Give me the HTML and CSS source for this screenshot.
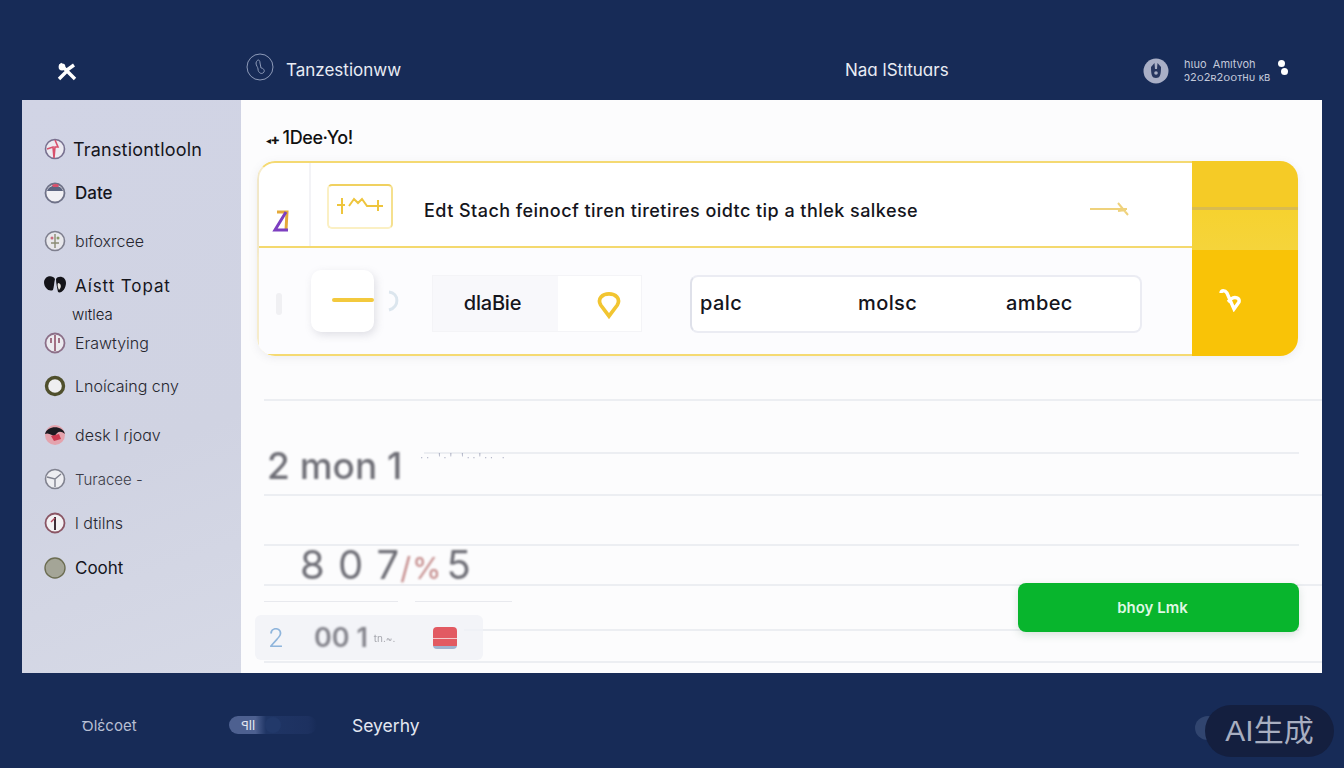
FILE: index.html
```html
<!DOCTYPE html>
<html lang="en">
<head>
<meta charset="UTF-8" />
<title>Transaction tool</title>
<link rel="stylesheet" href="styles.css">
</head>
<body>

<header class="topbar">
  <svg class="logo" width="20" height="20" viewBox="0 0 20 20"><path d="M3 2 L18 17 M2 17 L9 10 M10 8 L17 3" stroke="#fff" stroke-width="3.4" fill="none"/><circle cx="5" cy="5" r="3.4" fill="#fff"/></svg>
  <div class="top-title">
    <svg width="28" height="28" viewBox="0 0 28 28" fill="none" stroke="#8d9ab8" stroke-width="1"><circle cx="14" cy="14" r="13"/><path d="M10 10 C11 6 14 6 14 10 L15 15 C17 15 19 17 18 19 C16 22 12 20 12 16 C12 14 10 13 10 10 Z"/></svg>
    <span>Tanzestionww</span>
  </div>
  <div class="top-center">Naɑ lStıtuɑrs</div>
  <div class="top-user">
    <svg width="26" height="26" viewBox="0 0 26 26"><circle cx="13" cy="13" r="12.5" fill="#a9afc6"/><path d="M8 9 C8 17 9 20 13 20 C17 20 18 17 18 9 L14.5 5 L14 11 L12 11 L11.5 5 Z" fill="#27365f"/><circle cx="13" cy="15" r="1.8" fill="#a9afc6"/></svg>
    <div class="user-text">
      <span>hιuo &nbsp;Amıtvoh</span>
      <span>ɔ2ᴏ2ʀ2ᴏᴏᴛʜᴜ ᴋв</span>
    </div>
    <div class="user-dots"><i></i><i></i></div>
  </div>
</header>

<div class="frame">
  <nav class="sidebar">
    <div class="nav-item first">
      <svg width="22" height="22" viewBox="0 0 22 22"><circle cx="11" cy="11" r="9.5" fill="#eceaf1" stroke="#77708f" stroke-width="1.6"/><path d="M11 2 L14 9 L11 9 L10 20 L9 9 L3 11" fill="none" stroke="#d8506c" stroke-width="1.6"/></svg>
      <span>Transtiontlooln</span>
    </div>
    <div class="nav-item strong">
      <svg width="22" height="22" viewBox="0 0 22 22"><circle cx="11" cy="11" r="9.5" fill="#f1f0f4" stroke="#6f7288" stroke-width="1.8"/><path d="M3 9 C5 2 17 2 19 9 Z" fill="#5d6580"/><path d="M8 3 C10 1.5 13 1.5 15 3 L14 5 L9 5 Z" fill="#d8506c"/></svg>
      <span>Date</span>
    </div>
    <div class="nav-item light">
      <svg width="22" height="22" viewBox="0 0 22 22"><circle cx="11" cy="11" r="9.5" fill="#e8e8ec" stroke="#7e7f8e" stroke-width="1.6"/><circle cx="8" cy="8" r="1.5" fill="#c96a7c"/><circle cx="14" cy="8" r="1.5" fill="#8a9a6a"/><path d="M11 4 V18 M7 13 H15" stroke="#8a8c74" stroke-width="1.4"/></svg>
      <span>bıfoxrcee</span>
    </div>
    <div class="nav-item wide">
      <svg width="22" height="22" viewBox="0 0 22 22"><path d="M11 4 C9 0 1 0 0 7 C0 13 5 17 9 15 C10 12 10 8 11 4 Z" fill="#141419"/><path d="M12 4 C14 0 22 1 22 8 C22 14 17 19 14 17 C13 12 12 8 12 4 Z" fill="#141419"/><path d="M14 8 C17 8 18 12 15 15 C14 13 13 10 14 8 Z" fill="#e9e7e2"/></svg>
      <span>Aístt Topat</span>
    </div>
    <div class="nav-sub">wıtlea</div>
    <div class="nav-item light">
      <svg width="22" height="22" viewBox="0 0 22 22"><circle cx="11" cy="11" r="9.5" fill="#ecebf0" stroke="#8c6f88" stroke-width="1.8"/><path d="M11 3 V19 M7 6 V11 M15 6 V11" stroke="#8a4a62" stroke-width="1.5"/></svg>
      <span>Erawtying</span>
    </div>
    <div class="nav-item light">
      <svg width="22" height="22" viewBox="0 0 22 22"><circle cx="11" cy="11" r="8.5" fill="#eeeef0" stroke="#4f4f2c" stroke-width="3.4"/></svg>
      <span>Lnoícaing cny</span>
    </div>
    <div class="nav-item light">
      <svg width="22" height="22" viewBox="0 0 22 22"><circle cx="11" cy="11" r="10" fill="#e4a3ad"/><path d="M1 10 C3 1 19 1 21 10 C16 6 13 8 11 12 C8 12 5 8 1 10 Z" fill="#1c1a20"/><path d="M7 12 L15 10 L17 15 L10 17 Z" fill="#cd3a50"/></svg>
      <span>desk l ɾjoɑv</span>
    </div>
    <div class="nav-item faint">
      <svg width="22" height="22" viewBox="0 0 22 22" fill="none"><circle cx="11" cy="11" r="9.5" fill="#eeeef2" stroke="#80828f" stroke-width="1.6"/><path d="M3 9 L11 11 L17 6 M11 11 V19" stroke="#80828f" stroke-width="1.4"/></svg>
      <span>Turacee -</span>
    </div>
    <div class="nav-item light">
      <svg width="22" height="22" viewBox="0 0 22 22"><circle cx="11" cy="11" r="9.5" fill="#f3f2f4" stroke="#8a5564" stroke-width="1.8"/><path d="M11 5 V18" stroke="#3d2f38" stroke-width="2"/><path d="M7 10 L11 6" stroke="#b84a60" stroke-width="1.5"/></svg>
      <span>l dtilns</span>
    </div>
    <div class="nav-item">
      <svg width="22" height="22" viewBox="0 0 22 22"><circle cx="11" cy="11" r="10" fill="#a4a597" stroke="#6c6d52" stroke-width="1.4"/></svg>
      <span>Cooht</span>
    </div>
  </nav>

  <main class="main">
    <h2 class="page-title"><small>◂✚</small> 1Dee·Yo!</h2>

    <section class="panel">
      <div class="panel-body">
        <div class="panel-top">
          <div class="rank">
            <svg width="20" height="24" viewBox="0 0 20 24" fill="none" stroke-width="3"><path d="M6 3 H16 L15 21" stroke="#e4a93a"/><path d="M15 3 L4 21 H17" stroke="#7d3fc0"/></svg>
          </div>
          <div class="chart-box">
            <svg width="48" height="20" viewBox="0 0 48 20" fill="none" stroke="#eec53d" stroke-width="2"><path d="M1 10 H9 M6 3 V19 M13 11 L18 4 L22 8 L26 4 L31 11 L35 11 M35 11 H47 M42 5 V16"/></svg>
          </div>
          <p class="headline">Edt Stach feinocf tiren tiretires oidtc tip a thlek salkese</p>
          <svg class="arrow" width="40" height="16" viewBox="0 0 40 16" fill="none" stroke="#efd27c" stroke-width="2"><path d="M0 8 H37 M28 2 L38 14 M36 9 L28 10"/></svg>
        </div>
        <div class="panel-bottom">
          <div class="ghost-bar"></div>
          <div class="dash-tile"><i></i></div>
          <svg class="ghost-arc" width="16" height="22" viewBox="0 0 16 22" fill="none" stroke="#dce6ee" stroke-width="3"><path d="M3 2 C13 3 14 17 3 20"/></svg>
          <div class="seg">
            <div class="seg-label">dlaBie</div>
            <div class="seg-pin">
              <svg width="24" height="30" viewBox="0 0 26 30" fill="none" stroke="#f2c531" stroke-width="4"><path d="M13 27 L4 15 C0 8 6 3 13 3 C20 3 26 8 22 15 Z"/></svg>
            </div>
          </div>
          <div class="tabs">
            <span>palc</span>
            <span>molsc</span>
            <span>ambec</span>
          </div>
        </div>
      </div>
      <div class="panel-side">
        <div class="side-top"></div>
        <div class="side-bottom">
          <svg width="24" height="24" viewBox="0 0 24 24" fill="none" stroke="#fff" stroke-width="3.4"><path d="M3 5 C3 2 7 2 9 5 L16 21 L21 14 C22 10 17 8 13 11 L10 14"/></svg>
        </div>
      </div>
    </section>

    <div class="ledger">
      <div class="line-row r1"></div>
      <div class="line-row r2 short"></div>
      <div class="line-row r3 has-text">
        <span class="big-a">2 mon 1</span>
        <span class="tiny-note">·· ꞌ·ꞌ ꞌ··ꞌ·· ·</span>
      </div>
      <div class="line-row r4 short"></div>
      <div class="line-row r5 has-text">
        <span class="big-b">8 0 7<em>/%</em><b>5</b></span>
      </div>
      <div class="split-lines"><i></i><i></i></div>
      <div class="line-row r6 short"></div>
      <div class="line-row r7"></div>
      <div class="fade-box">
        <span class="fade-two">2</span>
        <span class="fade-num">00 1</span>
        <span class="fade-small">tn.~.</span>
        <span class="fade-tag"></span>
      </div>
    </div>

    <button class="go-btn">bhoy Lmk</button>
  </main>
</div>

<footer class="bottombar">
  <span class="foot-a">Ꝺlέcoet</span>
  <div class="foot-pill"><span>ꟼll</span><i></i></div>
  <span class="foot-b">Seyerhy</span>
</footer>

<div class="ai-dot"></div>
<div class="ai-badge">AI生成</div>

</body>
</html>
```

FILE: styles.css
```css
* { box-sizing: border-box; }
html, body { height: 100%; }
body {
  margin: 0;
  width: 1344px;
  height: 768px;
  overflow: hidden;
  background: #172b57;
  color: #15151c;
  font-family: Inter, "Noto Sans", sans-serif;
  position: relative;
}

/* top bar */
.topbar {
  height: 100px;
  display: grid;
  grid-template-columns: 189px 599px 298px auto;
  align-items: center;
  padding: 38px 0 0 57px;
  color: #e9ecf4;
}
.logo { margin-top: 6px; }
.top-title {
  display: flex;
  align-items: center;
  gap: 12px;
  font-size: 17px;
  margin-top: -4px;
}
.top-title span { margin-top: 5px; }
.top-center { font-size: 17px; margin-top: 2px; }
.top-user {
  display: flex;
  align-items: center;
  margin-top: 3px;
}
.user-text {
  display: flex;
  flex-direction: column;
  margin-left: 15px;
  width: 94px;
  font-size: 11px;
  line-height: 13px;
  color: #c3c9da;
  white-space: nowrap;
}
.user-dots { display: flex; flex-direction: column; gap: 1px; margin-top: -6px; }
.user-dots i {
  width: 7px;
  height: 7px;
  border-radius: 50%;
  background: #fff;
}
.user-dots i:last-child { margin-left: 3px; }

/* main frame */
.frame {
  margin: 0 22px;
  height: 573px;
  display: flex;
  background: #fcfcfd;
}
.sidebar {
  width: 219px;
  flex: none;
  padding: 38px 0 0 22px;
  background: linear-gradient(160deg, #d1d4e5, #d0d3e2 60%, #d6d9e6);
  display: grid;
  grid-template-rows: 44px 48px 45px 29px 28px 43px 49px 44px 44px 45px;
  align-content: start;
}
.nav-item {
  height: 22px;
  display: flex;
  align-items: center;
  gap: 9px;
  font-size: 17px;
  white-space: nowrap;
}
.nav-item.first { gap: 7px; font-size: 18px; letter-spacing: .2px; }
.nav-item.strong { font-weight: 500; }
.nav-item.wide { letter-spacing: .9px; }
.nav-item.light { font-weight: 300; color: #26262f; font-size: 16px; }
.nav-item.faint { font-weight: 300; color: #3c3c48; font-size: 15px; }
.nav-sub {
  height: 22px;
  line-height: 22px;
  padding-left: 28px;
  font-size: 15px;
  font-weight: 300;
}

.main {
  flex: 1;
  position: relative;
  min-width: 0;
}
.page-title {
  margin: 0;
  padding: 26px 0 0 25px;
  height: 61px;
  font-size: 18px;
  line-height: 24px;
  font-weight: 500;
  letter-spacing: -.4px;
  color: #111;
}
.page-title small { font-size: 10px; }

/* yellow panel */
.panel {
  margin: 0 24px 0 16px;
  height: 195px;
  display: flex;
  border-radius: 18px;
  overflow: hidden;
  background: #fff;
  box-shadow: 0 2px 8px rgba(120, 120, 140, .12);
}
.panel-body {
  flex: 1;
  display: flex;
  flex-direction: column;
  border: 2px solid #f5da72;
  border-left-color: #f6eccb;
  border-right: 0;
  border-radius: 18px 0 0 18px;
  min-width: 0;
}
.panel-top {
  height: 85px;
  display: flex;
  align-items: center;
  border-bottom: 2px solid #f4d96e;
  box-shadow: 0 4px 8px rgba(120, 120, 140, .08);
}
.rank {
  width: 52px;
  height: 100%;
  flex: none;
  padding: 46px 0 0 12px;
  border-right: 2px solid #f3f3f6;
}
.chart-box {
  width: 66px;
  height: 45px;
  flex: none;
  margin: 3px 31px 0 16px;
  border: 2px solid #fbf0c4;
  border-top-color: #f0d160;
  border-right-color: #f5e08e;
  border-radius: 5px;
  display: flex;
  align-items: center;
  justify-content: center;
  padding-bottom: 2px;
}
.headline {
  margin: 11px 0 0;
  width: 666px;
  flex: none;
  font-size: 18px;
  font-weight: 500;
  letter-spacing: .45px;
  white-space: nowrap;
}
.arrow { margin-top: 8px; }
.panel-bottom {
  flex: 1;
  display: flex;
  align-items: center;
  background: #fcfcfe;
  padding: 5px 0 0 17px;
}
.ghost-bar {
  width: 6px;
  height: 22px;
  margin-right: 29px;
  border-radius: 3px;
  background: #f0f0f3;
}
.dash-tile {
  width: 63px;
  height: 62px;
  border-radius: 10px;
  background: #fff;
  box-shadow: 2px 3px 8px rgba(110, 110, 130, .2);
  padding: 28px 0 0 21px;
  margin-top: -6px;
}
.dash-tile i {
  display: block;
  width: 42px;
  height: 4px;
  border-radius: 2px;
  background: #f3c93e;
}
.ghost-arc { margin: -6px 0 0 12px; }
.seg {
  width: 210px;
  height: 57px;
  margin: 0 48px 0 30px;
  display: flex;
  border: 1px solid #f4f4f7;
  background: #fff;
}
.seg-label {
  width: 125px;
  background: #f8f8fb;
  line-height: 55px;
  text-align: center;
  padding-right: 6px;
  font-size: 20px;
  font-weight: 500;
  letter-spacing: -.2px;
}
.seg-pin {
  flex: 1;
  display: flex;
  align-items: center;
  justify-content: center;
  padding: 2px 0 0 18px;
}
.tabs {
  width: 452px;
  height: 58px;
  display: grid;
  grid-template-columns: 158px 148px auto;
  align-items: center;
  padding: 0 0 1px 8px;
  font-size: 20px;
  font-weight: 500;
  letter-spacing: .4px;
  background: #fff;
  border: 2px solid #ebecf3;
  border-left-color: #dfe1ea;
  border-radius: 8px;
}
.panel-side {
  width: 106px;
  flex: none;
  display: flex;
  flex-direction: column;
}
.side-top {
  height: 89px;
  background: linear-gradient(#f5cb26 0 46px, #d9bb4f 46px 49px, #f6d22f 49px, #f5d43b);
}
.side-bottom {
  flex: 1;
  background: #f9c307;
  display: flex;
  justify-content: center;
  padding: 38px 30px 0 0;
}

/* faded rows below the panel */
.ledger {
  position: relative;
  margin: 0 0 0 23px;
}
.line-row { border-bottom: 2px solid #eceef2; }
.line-row.short { margin-right: 23px; }
.r1 { height: 45px; }
.r2 { height: 53px; margin-left: 160px; }
.r3 { height: 42px; }
.r4 { height: 50px; }
.r5 { height: 40px; }
.r6 { height: 29px; margin-left: 200px; }
.r7 { height: 32px; }
.has-text {
  display: flex;
  align-items: flex-start;
  white-space: nowrap;
  color: #6e6e76;
}
.big-a {
  font-size: 37px;
  font-weight: 500;
  line-height: 34px;
  margin: -5px 0 0 3px;
  filter: blur(1px);
}
.tiny-note {
  font-size: 10px;
  margin: -4px 0 0 18px;
  color: #a9adc0;
  letter-spacing: 3px;
  filter: blur(.6px);
}
.big-b {
  font-size: 40px;
  line-height: 40px;
  margin: -1px 0 0 36px;
  letter-spacing: 1px;
  filter: blur(1px);
}
.big-b em { font-style: normal; color: #c48a8a; font-size: 30px; margin-right: 4px; }
.big-b b { font-weight: 400; }
.split-lines {
  height: 16px;
  display: flex;
  gap: 17px;
  align-items: flex-end;
}
.split-lines i { height: 1px; background: #e8e9ee; }
.split-lines i:first-child { width: 134px; }
.split-lines i:last-child { width: 97px; }
.fade-box {
  position: absolute;
  left: -9px;
  top: 259px;
  width: 228px;
  height: 45px;
  display: flex;
  align-items: center;
  border-radius: 6px;
  background: rgba(240, 241, 246, .8);
  white-space: nowrap;
}
.fade-two {
  margin-left: 13px;
  font-size: 26px;
  color: #8fb5dc;
  font-weight: 300;
  filter: blur(.6px);
}
.fade-num {
  margin-left: 30px;
  font-size: 27px;
  font-weight: 600;
  color: #84848c;
  filter: blur(.8px);
}
.fade-small {
  margin-left: 6px;
  font-size: 10px;
  color: #a6a7ae;
  filter: blur(.5px);
}
.fade-tag {
  width: 24px;
  height: 22px;
  margin-left: 38px;
  border-radius: 4px;
  background: linear-gradient(#e25a62 0 48%, #f3c9cb 48% 54%, #e25a62 54% 85%, #9fb3cf 85%);
  filter: blur(.5px);
}
.go-btn {
  position: absolute;
  right: 23px;
  top: 483px;
  width: 281px;
  height: 49px;
  padding: 0 12px 0 0;
  border: 0;
  border-radius: 8px;
  background: #08b52d;
  color: #dff8e3;
  font-family: inherit;
  font-size: 15px;
  font-weight: 600;
  box-shadow: 0 3px 8px rgba(60, 110, 80, .18);
}

/* bottom bar */
.bottombar {
  height: 95px;
  display: flex;
  align-items: center;
  padding: 9px 0 0 82px;
  color: #e3e7f1;
  font-size: 17.5px;
}
.foot-a { width: 147px; font-size: 15px; color: #b7bfd3; }
.foot-pill {
  width: 88px;
  height: 18px;
  margin-right: 35px;
  display: flex;
  align-items: center;
  border-radius: 9px;
  padding-left: 12px;
  font-size: 13px;
  background: linear-gradient(90deg, #4d6090 0 30%, #1f3565 42%, #1d3160 90%, #172b57);
  position: relative;
}
.foot-pill i {
  margin-left: 10px;
  width: 16px;
  height: 16px;
  border-radius: 50%;
  background: #22396a;
}

/* watermark */
.ai-dot {
  position: absolute;
  left: 1195px;
  top: 716px;
  width: 26px;
  height: 24px;
  border-radius: 50%;
  background: #31456f;
}
.ai-badge {
  position: absolute;
  left: 1205px;
  top: 705px;
  width: 129px;
  height: 52px;
  border-radius: 26px;
  background: #141f3f;
  color: #a8aec0;
  font-family: "Liberation Sans", "Noto Sans CJK SC", sans-serif;
  font-size: 30px;
  line-height: 52px;
  text-align: center;
}
```
